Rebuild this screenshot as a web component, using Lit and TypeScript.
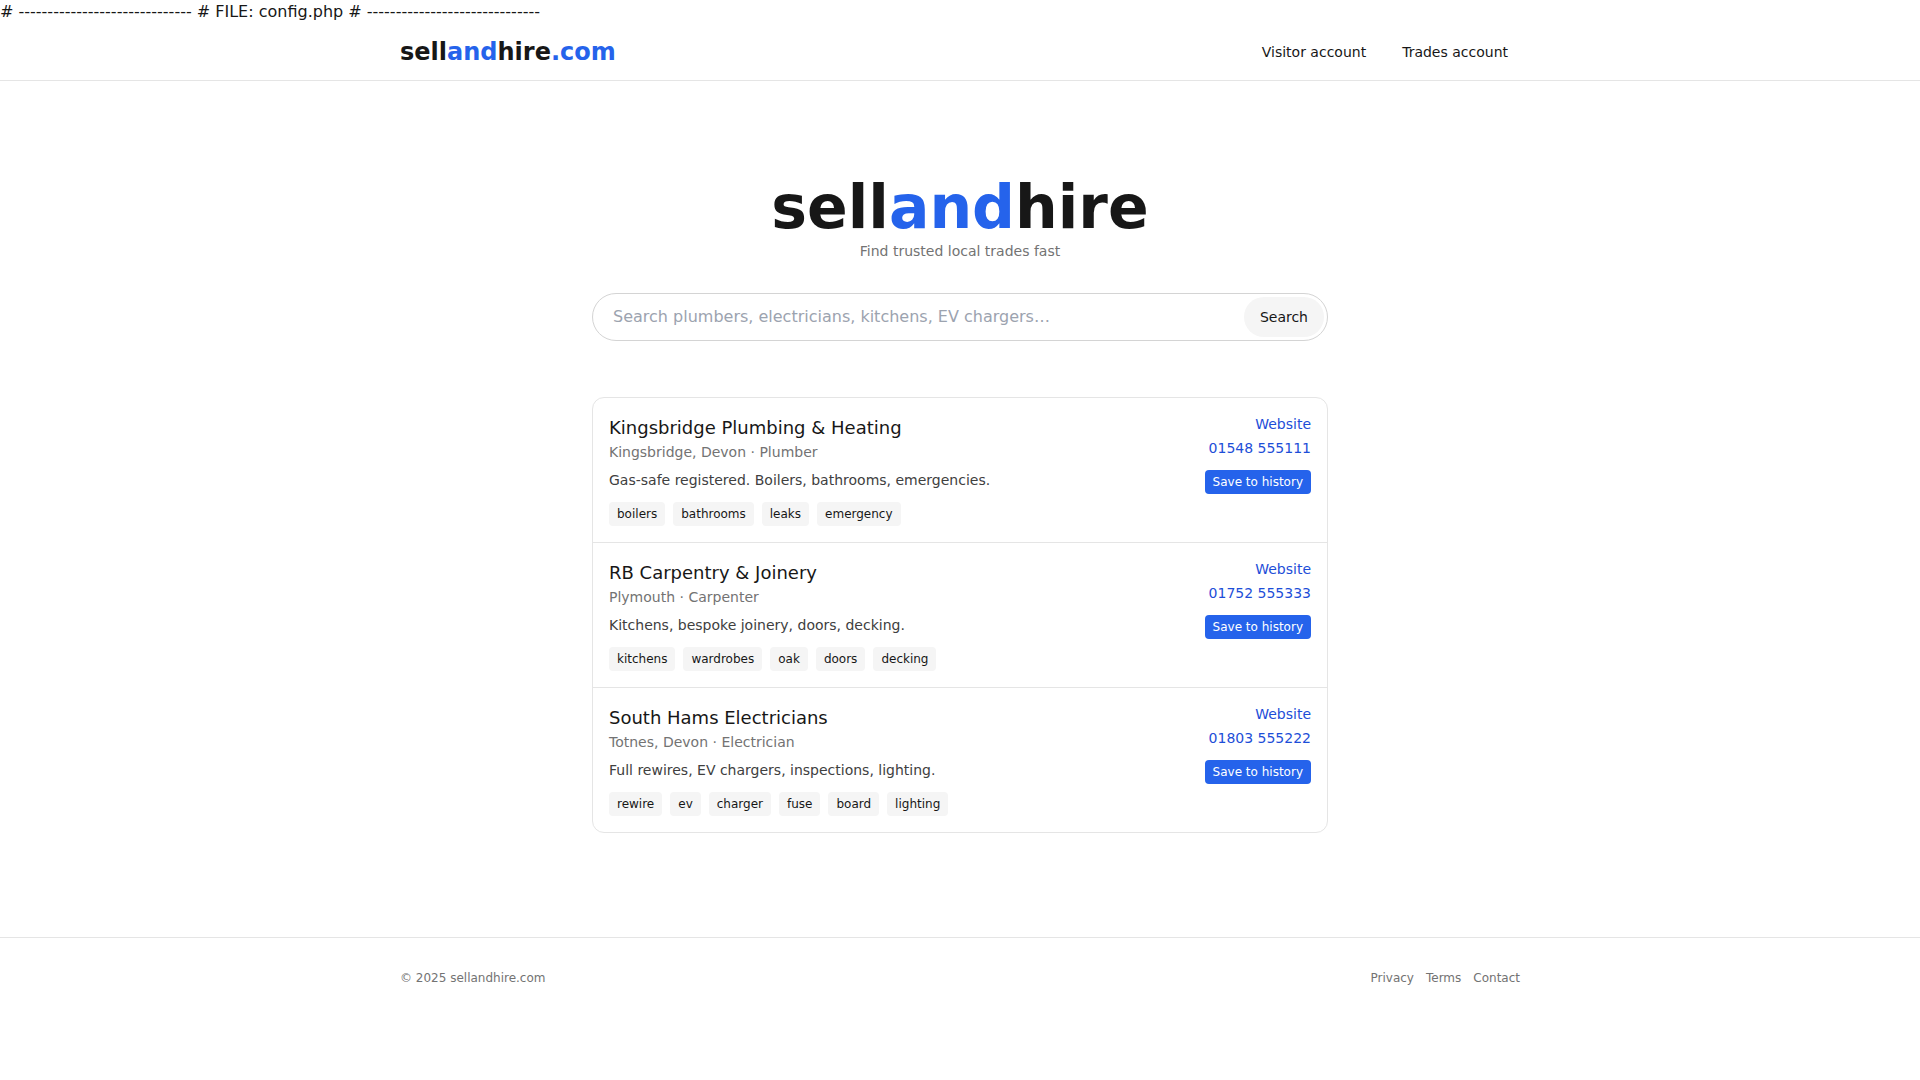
import { LitElement, html, css } from "lit";
import { customElement, property, state } from "lit/decorators.js";

interface Trade {
  name: string;
  place: string;
  trade: string;
  about: string;
  phone: string;
  tags: string[];
}

const TRADES: Trade[] = [
  {
    name: "Kingsbridge Plumbing & Heating",
    place: "Kingsbridge, Devon",
    trade: "Plumber",
    about: "Gas-safe registered. Boilers, bathrooms, emergencies.",
    phone: "01548 555111",
    tags: ["boilers", "bathrooms", "leaks", "emergency"],
  },
  {
    name: "RB Carpentry & Joinery",
    place: "Plymouth",
    trade: "Carpenter",
    about: "Kitchens, bespoke joinery, doors, decking.",
    phone: "01752 555333",
    tags: ["kitchens", "wardrobes", "oak", "doors", "decking"],
  },
  {
    name: "South Hams Electricians",
    place: "Totnes, Devon",
    trade: "Electrician",
    about: "Full rewires, EV chargers, inspections, lighting.",
    phone: "01803 555222",
    tags: ["rewire", "ev", "charger", "fuse", "board", "lighting"],
  },
];

@customElement("trade-row")
export class TradeRow extends LitElement {
  @property({ attribute: false }) trade!: Trade;

  static styles = css`
    :host {
      display: block;
    }
    .row {
      display: flex;
      justify-content: space-between;
      gap: 16px;
      padding: 16px;
      font-size: 14px;
      line-height: 20px;
    }
    .name {
      margin: 0;
      font-size: 18px;
      font-weight: 400;
      line-height: 28px;
      color: #171717;
    }
    .place,
    .about {
      margin: 0;
      color: #737373;
    }
    .about {
      margin-top: 8px;
      color: #404040;
    }
    .tags {
      display: flex;
      flex-wrap: wrap;
      gap: 8px;
      margin: 12px 0 0;
      padding: 0;
      list-style: none;
    }
    .tag {
      padding: 4px 8px;
      border-radius: 4px;
      background: #f5f5f5;
      font-size: 12px;
      line-height: 16px;
    }
    .actions {
      display: flex;
      flex: none;
      flex-direction: column;
      align-items: flex-end;
      gap: 4px;
    }
    .link {
      color: #1d4ed8;
      text-decoration: none;
    }
    .link:hover {
      text-decoration: underline;
    }
    .save {
      margin: 8px 0 0;
      padding: 4px 8px;
      border: 0;
      border-radius: 4px;
      background: #2563eb;
      color: #fff;
      font: inherit;
      font-size: 12px;
      line-height: 16px;
      cursor: pointer;
    }
  `;

  render() {
    const t = this.trade;
    return html`
      <article class="row">
        <div>
          <h2 class="name">${t.name}</h2>
          <p class="place">${t.place} · ${t.trade}</p>
          <p class="about">${t.about}</p>
          <ul class="tags">
            ${t.tags.map((tag) => html`<li class="tag">${tag}</li>`)}
          </ul>
        </div>
        <div class="actions">
          <a class="link" href="#website">Website</a>
          <a class="link" href="tel:${t.phone.replace(" ", "")}">${t.phone}</a>
          <button class="save" type="button">Save to history</button>
        </div>
      </article>
    `;
  }
}

@customElement("app-root")
export class AppRoot extends LitElement {
  @state() private query = "";

  static styles = css`
    :host {
      display: block;
      background: #fff;
      color: #171717;
      font-family: "DejaVu Sans", sans-serif;
      font-size: 16px;
      line-height: 24px;
    }
    .header {
      border-bottom: 1px solid #e5e5e5;
    }
    .bar {
      box-sizing: border-box;
      display: flex;
      align-items: center;
      justify-content: space-between;
      max-width: 1152px;
      margin: 0 auto;
      padding: 12px 16px;
    }
    .brand {
      color: inherit;
      font-size: 24px;
      font-weight: 700;
      line-height: 32px;
      text-decoration: none;
    }
    .accent {
      color: #2563eb;
    }
    .nav {
      display: flex;
      gap: 12px;
      font-size: 14px;
      line-height: 20px;
    }
    .nav-link {
      padding: 6px 12px;
      color: inherit;
      text-decoration: none;
    }
    .main {
      box-sizing: border-box;
      max-width: 768px;
      margin: 0 auto;
      padding: 96px 16px 104px;
    }
    .title {
      margin: 0;
      font-size: 60px;
      font-weight: 700;
      line-height: 60px;
      text-align: center;
    }
    .tagline {
      margin: 4px 0 32px;
      color: #737373;
      font-size: 14px;
      line-height: 20px;
      text-align: center;
    }
    .search {
      display: flex;
      padding: 3px;
      border: 1px solid #d4d4d4;
      border-radius: 24px;
    }
    .search:focus-within {
      border-color: #2563eb;
    }
    .query {
      flex: 1;
      min-width: 0;
      padding: 0 17px;
      border: 0;
      outline: 0;
      background: transparent;
      color: inherit;
      font: inherit;
    }
    .query::placeholder {
      color: #9ca3af;
      opacity: 1;
    }
    .submit {
      padding: 10px 16px;
      border: 0;
      border-radius: 20px;
      background: #f5f5f5;
      color: inherit;
      font: inherit;
      font-size: 14px;
      line-height: 20px;
      cursor: pointer;
    }
    .results {
      margin-top: 56px;
      border: 1px solid #e5e5e5;
      border-radius: 12px;
    }
    .result + .result {
      border-top: 1px solid #e5e5e5;
    }
    .footer {
      border-top: 1px solid #e5e5e5;
      color: #737373;
      font-size: 12px;
      line-height: 16px;
    }
    .footer-bar {
      padding: 32px 16px;
    }
    .footer-nav {
      display: flex;
      gap: 12px;
    }
    .footer-link {
      color: inherit;
      text-decoration: none;
    }
  `;

  private onInput(e: Event) {
    this.query = (e.target as HTMLInputElement).value;
  }

  render() {
    return html`
      <div># ------------------------------ # FILE: config.php # ------------------------------</div>
      <header class="header">
        <div class="bar">
          <a class="brand" href="#home">sell<span class="accent">and</span>hire<span class="accent">.com</span></a>
          <nav class="nav">
            <a class="nav-link" href="#visitor">Visitor account</a>
            <a class="nav-link" href="#trades">Trades account</a>
          </nav>
        </div>
      </header>
      <main class="main">
        <h1 class="title">sell<span class="accent">and</span>hire</h1>
        <p class="tagline">Find trusted local trades fast</p>
        <form class="search" role="search" @submit=${(e: Event) => e.preventDefault()}>
          <input
            class="query"
            type="text"
            name="q"
            aria-label="Search trades"
            placeholder="Search plumbers, electricians, kitchens, EV chargers…"
            .value=${this.query}
            @input=${this.onInput}
          />
          <button class="submit" type="submit">Search</button>
        </form>
        <section class="results">
          ${TRADES.map((t) => html`<trade-row class="result" .trade=${t}></trade-row>`)}
        </section>
      </main>
      <footer class="footer">
        <div class="bar footer-bar">
          <span>© 2025 sellandhire.com</span>
          <nav class="footer-nav">
            <a class="footer-link" href="#privacy">Privacy</a>
            <a class="footer-link" href="#terms">Terms</a>
            <a class="footer-link" href="#contact">Contact</a>
          </nav>
        </div>
      </footer>
    `;
  }
}
